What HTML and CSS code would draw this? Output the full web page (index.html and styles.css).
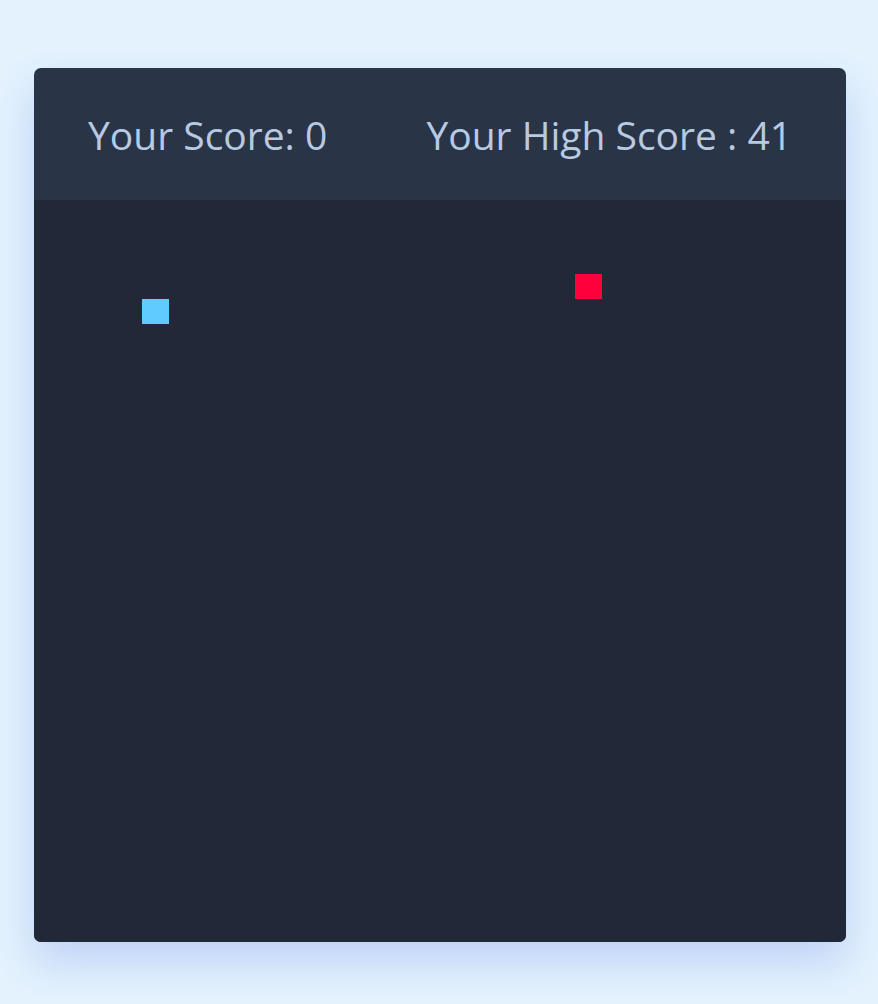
FILE: index.html
```html
<!DOCTYPE html>
<html>
<head>
<meta charset="utf-8">
<link rel="stylesheet" href="styles.css">
</head>
<body>
<div class="wrapper">
  <div class="details">
    <span class="score">Your Score: 0</span>
    <span class="high-score">Your High Score : 41</span>
  </div>
  <div class="play-board">
    <div class="food" style="grid-area: 4 / 21"></div>
    <div class="head" style="grid-area: 5 / 5"></div>
  </div>
</div>
</body>
</html>
```
FILE: styles.css
```css
* { box-sizing: border-box; margin: 0; padding: 0; }
html, body { height: 100%; }
body {
  background: #e3f2fd;
  font-family: "Open Sans", sans-serif;
  display: flex;
  align-items: flex-start;
  justify-content: center;
  padding-top: 68px;
  padding-left: 2px;
}
.wrapper {
  width: 812px;
  height: 874px;
  border-radius: 7px;
  overflow: hidden;
  background: #293447;
  box-shadow: 0 20px 40px rgba(52, 87, 220, 0.2);
  display: flex;
  flex-direction: column;
}
.details {
  height: 132px;
  flex-shrink: 0;
  display: flex;
  align-items: center;
  justify-content: space-between;
  padding: 0 54px 0 54px;
  color: #b8cae2;
  font-size: 39px;
  font-weight: 500;
}
.play-board {
  flex: 1;
  background: #212837;
  display: grid;
  grid-template-columns: repeat(30, 1fr);
  grid-template-rows: repeat(30, 1fr);
}
.food { background: #ff003d; }
.head { background: #60cbff; }
```
